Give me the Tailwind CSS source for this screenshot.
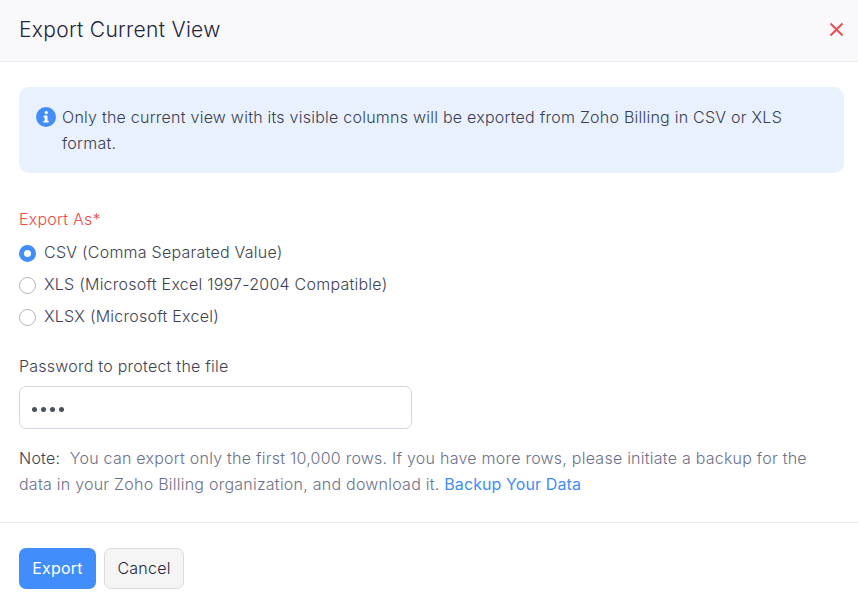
<!DOCTYPE html>
<html lang="en">
<head>
    <meta charset="UTF-8">
    <title>Export Current View</title>
    <script src="https://cdn.jsdelivr.net/npm/@tailwindcss/browser@4"></script>
</head>
<body class="bg-white font-['Inter',sans-serif] text-[16px] font-[350] tracking-[0.24px] text-[#21263c] overflow-hidden">
    <div class="w-[858px] h-[607px] flex flex-col">
        <header class="h-[62px] shrink-0 flex items-center justify-between pl-[19px] pr-[14px] bg-[#f9f9fb] border-b border-[#ebebef]">
            <h1 class="text-[21px] font-[350] tracking-[0.29px] mb-[2px]">Export Current View</h1>
            <svg width="15" height="15" viewBox="0 0 15 15" class="mb-[3px]"><path d="M1.5 1.5l12 12M13.5 1.5l-12 12" stroke="#f04b4b" stroke-width="2" fill="none"/></svg>
        </header>

        <main class="px-[19px] pt-[25px]">
            <div class="h-[86px] mr-[-5px] bg-[#e9f1fe] rounded-[10px] pl-[17px] pr-[30px] pt-[17px] flex gap-[6px] leading-[26px] text-[#383e54]">
                <svg width="20" height="20" viewBox="0 0 20 20" class="shrink-0 mt-[3px]">
                    <circle cx="10" cy="10" r="10" fill="#408dfb"/>
                    <circle cx="10.3" cy="5.6" r="1.6" fill="#fff"/>
                    <path d="M7.5 8.6h4v5.2h1.2v1.8H7.3v-1.8h1.4v-3.4H7.5z" fill="#fff"/>
                </svg>
                <p>Only the current view with its visible columns will be exported from Zoho Billing in CSV or XLS format.</p>
            </div>

            <div class="mt-[36px] text-[#ee4a4a] leading-[20px]">Export As*</div>
            <div class="mt-[13px] flex flex-col gap-[10px] text-[#3e4152]">
                <label class="h-[22px] flex items-center gap-[8px]">
                    <span class="w-[17px] h-[17px] rounded-full border-[5px] border-[#408dfb] bg-white"></span>
                    <span class="mb-[2px]">CSV (Comma Separated Value)</span>
                </label>
                <label class="h-[22px] flex items-center gap-[8px]">
                    <span class="w-[17px] h-[17px] rounded-full border border-[#b5b5b9] bg-white"></span>
                    <span class="mb-[2px]">XLS (Microsoft Excel 1997-2004 Compatible)</span>
                </label>
                <label class="h-[22px] flex items-center gap-[8px]">
                    <span class="w-[17px] h-[17px] rounded-full border border-[#b5b5b9] bg-white"></span>
                    <span class="mb-[2px]">XLSX (Microsoft Excel)</span>
                </label>
            </div>

            <div class="mt-[28px] leading-[20px] text-[#3e4152]">Password to protect the file</div>
            <div class="mt-[10px] w-[393px] h-[43px] border border-[#d5d5e2] rounded-[7px] flex items-center gap-[4px] pl-[12px] pt-[3px]">
                <span class="w-[5px] h-[5px] rounded-full bg-[#4a4e5e]"></span>
                <span class="w-[5px] h-[5px] rounded-full bg-[#4a4e5e]"></span>
                <span class="w-[5px] h-[5px] rounded-full bg-[#4a4e5e]"></span>
                <span class="w-[5px] h-[5px] rounded-full bg-[#4a4e5e]"></span>
            </div>

            <p class="mt-[16px] leading-[26px] text-[#6c718a]"><span class="text-[#3e4152]">Note:</span>&nbsp; You can export only the first 10,000 rows. If you have more rows, please initiate a backup for the data in your Zoho Billing organization, and download it. <span class="text-[#408dfb] font-normal tracking-[0.1px]">Backup Your Data</span></p>
        </main>

        <footer class="mt-[25px] border-t border-[#ebebef] px-[19px] pt-[25px] flex gap-[8px]">
            <button class="w-[77px] h-[41px] pb-[2px] rounded-[7px] bg-[#408dfb] text-white font-normal">Export</button>
            <button class="w-[80px] h-[41px] pb-[2px] rounded-[7px] bg-[#f5f5f5] border border-[#dcdcdc] text-[#21263c]">Cancel</button>
        </footer>
    </div>
</body>
</html>
